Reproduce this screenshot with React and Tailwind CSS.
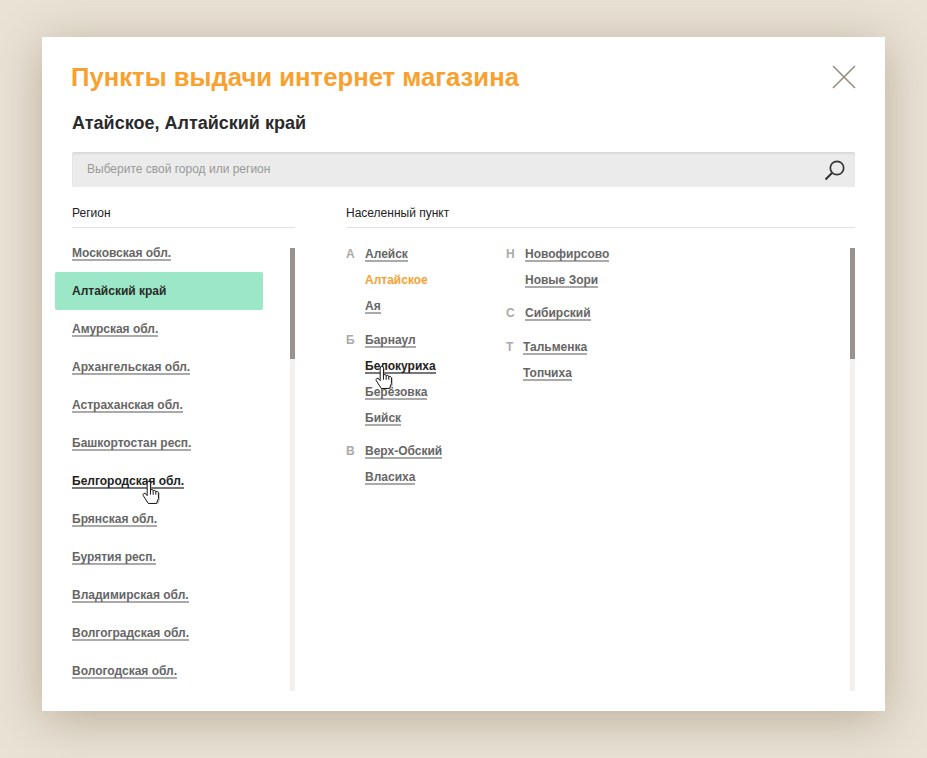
const regions = ["Московская обл.", "Алтайский край", "Амурская обл.", "Архангельская обл.", "Астраханская обл.", "Башкортостан респ.", "Белгородская обл.", "Брянская обл.", "Бурятия респ.", "Владимирская обл.", "Волгоградская обл.", "Вологодская обл."];

const col1 = [
  { l: "А", w: "w-[19px]", mb: "mb-2", items: ["Алейск", "Алтайское", "Ая"] },
  { l: "Б", w: "w-[19px]", mb: "mb-[7px]", items: ["Барнаул", "Белокуриха", "Берёзовка", "Бийск"] },
  { l: "В", w: "w-[19px]", mb: "mb-2", items: ["Верх-Обский", "Власиха"] },
];
const col2 = [
  { l: "Н", w: "w-[19px]", mb: "mb-[7px]", items: ["Новофирсово", "Новые Зори"] },
  { l: "С", w: "w-[19px]", mb: "mb-2", items: ["Сибирский"] },
  { l: "Т", w: "w-[17px]", mb: "mb-2", items: ["Тальменка", "Топчиха"] },
];

function Hand({ className }) {
  return (
    <svg className={className} width="20" height="24" viewBox="0 0 18 22" aria-hidden="true">
      <path d="M6.5 21.5 L2 14.5 Q1.2 13 2.4 12.3 Q3.6 11.8 4.5 13 L5.5 14.3 V3 Q5.5 1.2 7 1.2 Q8.5 1.2 8.5 3 V9 Q10.3 8.2 11 9.6 Q12.7 9 13.4 10.4 Q15.2 10 15.8 11.6 L15.8 17 L14 21.5 Z" fill="#9a9a9a" opacity="0.55" transform="translate(1.5 1)" />
      <path d="M6.5 21.5 L2 14.5 Q1.2 13 2.4 12.3 Q3.6 11.8 4.5 13 L5.5 14.3 V3 Q5.5 1.2 7 1.2 Q8.5 1.2 8.5 3 V9 Q10.3 8.2 11 9.6 Q12.7 9 13.4 10.4 Q15.2 10 15.8 11.6 L15.8 17 L14 21.5 Z" fill="#fff" stroke="#111" strokeWidth="0.9" strokeLinejoin="round" />
      <path d="M8.5 9 V13.5 M11 9.6 V13.5 M13.4 10.4 V13.5" stroke="#111" strokeWidth="0.9" fill="none" />
    </svg>
  );
}

function Link({ name, hover, handClass }) {
  return (
    <span className={`relative inline-block h-[15px] leading-[14px] border-b-2 ${hover ? "text-[#222] border-[#777]" : "text-[#666] border-[#aaa]"}`}>
      {name}
      {hover && <Hand className={handClass} />}
    </span>
  );
}

function Group({ g }) {
  return (
    <div className={`flex ${g.mb}`}>
      <div className={`${g.w} h-[26px] leading-[26px] text-[#aaa] shrink-0`}>{g.l}</div>
      <div>
        {g.items.map((n) => (
          <div key={n} className="h-[26px] flex items-center">
            {n === "Алтайское" ? (
              <span className="text-[#f9a12e]">{n}</span>
            ) : (
              <Link name={n} hover={n === "Белокуриха"} handClass="absolute left-[9px] top-[6px]" />
            )}
          </div>
        ))}
      </div>
    </div>
  );
}

function Scrollbar() {
  return (
    <div className="w-[5px] h-[443px] mt-[20px] bg-[#f3f1ef] shrink-0">
      <div className="h-[111px] bg-[#9a938d]" />
    </div>
  );
}

export default function App() {
  return (
    <div className="w-[927px] h-[758px] overflow-hidden bg-[#e9e2d5] pt-[37px] pl-[42px] font-['Liberation_Sans',Arial,sans-serif]">
      <div className="w-[843px] h-[674px] bg-white shadow-[0_8px_45px_rgba(110,90,60,0.38)] pl-[30px] pr-[30px] flex flex-col">
        <div className="flex justify-between items-center h-[30px] mt-[25px]">
          <h1 className="text-[25.7px] leading-[30px] font-bold text-[#f9a12e] -ml-px">Пункты выдачи интернет магазина</h1>
          <svg width="24" height="24" viewBox="0 0 24 24" className="-mr-px">
            <path d="M1 1 L23 23 M23 1 L1 23" stroke="#9a8a7a" strokeWidth="1.6" fill="none" />
          </svg>
        </div>
        <h2 className="text-[18px] leading-[20px] font-bold text-[#2a2a2a] mt-[21px]">Атайское, Алтайский край</h2>
        <div className="h-[35px] mt-[19px] bg-[#ebebeb] rounded-[2px] shadow-[inset_0_2px_2px_rgba(0,0,0,0.08)] flex items-center justify-between pl-[15px] pr-[9px]">
          <span className="text-[12px] text-[#999] -mt-px">Выберите свой город или регион</span>
          <svg width="22" height="22" viewBox="0 0 22 22">
            <circle cx="13" cy="9" r="6.7" stroke="#333" strokeWidth="1.7" fill="none" />
            <path d="M8.2 13.8 L1.5 20.5" stroke="#333" strokeWidth="2" fill="none" />
          </svg>
        </div>
        <div className="flex gap-[51px] mt-[18px] min-h-0">
          <section className="w-[223px] shrink-0">
            <div className="h-[23px] leading-[17px] text-[12px] text-[#222] border-b border-[#e2e2e2]">Регион</div>
            <div className="flex justify-between">
              <ul className="pt-[6px] text-[12px] font-bold w-[191px] -ml-[17px]">
                {regions.map((r) =>
                  r === "Алтайский край" ? (
                    <li key={r} className="h-[38px] pl-[17px] flex items-center bg-[#9de7c9] rounded-[2px] text-[#2a2a2a] w-[208px]">{r}</li>
                  ) : (
                    <li key={r} className="h-[38px] pl-[17px] flex items-center">
                      <Link name={r} hover={r === "Белгородская обл."} handClass="absolute left-[69px] top-[6px]" />
                    </li>
                  )
                )}
              </ul>
              <Scrollbar />
            </div>
          </section>
          <section className="flex-1 min-w-0">
            <div className="h-[23px] leading-[17px] text-[12px] text-[#222] border-b border-[#e2e2e2]">Населенный пункт</div>
            <div className="flex justify-between">
              <div className="flex pt-[13px] text-[12px] font-bold">
                <div className="w-[160px]">{col1.map((g) => <Group key={g.l} g={g} />)}</div>
                <div>{col2.map((g) => <Group key={g.l} g={g} />)}</div>
              </div>
              <Scrollbar />
            </div>
          </section>
        </div>
      </div>
    </div>
  );
}
